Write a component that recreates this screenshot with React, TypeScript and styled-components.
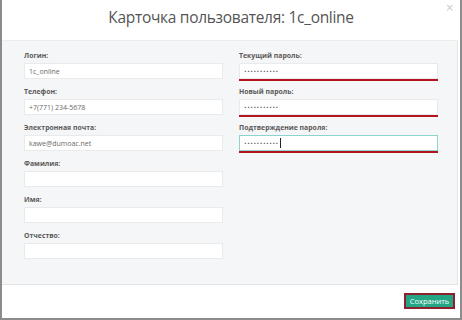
import React from "react";
import styled, { createGlobalStyle } from "styled-components";

const Global = createGlobalStyle`
  html, body { margin: 0; padding: 0; background: #ffffff; }
  * { box-sizing: border-box; }
`;

const Modal = styled.div`
  width: 462px;
  height: 320px;
  display: flex;
  flex-direction: column;
  background: #ffffff;
  border-left: 2px solid #8c8c8c;
  border-right: 2px solid #8c8c8c;
  border-bottom: 2px solid #8c8c8c;
  font-family: "Open Sans", "Noto Sans", sans-serif;
  position: relative;
`;

const Header = styled.div`
  height: 40px;
  display: flex;
  align-items: center;
  justify-content: center;
  padding-bottom: 6px;
`;

const Title = styled.h1`
  margin: 0;
  font-size: 15.5px;
  font-weight: 400;
  color: #555555;
  letter-spacing: -0.3px;
`;

const Close = styled.span`
  position: absolute;
  top: 2px;
  right: 6px;
  font-size: 10px;
  color: #c8c8c8;
  font-family: "DejaVu Sans", sans-serif;
`;

const Body = styled.div`
  height: 245px;
  background: #f5f6f7;
  border-top: 1px solid #eceded;
  border-bottom: 1px solid #e2e3e4;
  border-right: 1px solid #e4e5e6;
  margin-right: 2px;
  padding: 10px 0 0 22px;
  display: grid;
  grid-template-columns: 199px 199px;
  column-gap: 16px;
  align-items: start;
`;

const Column = styled.div`
  display: flex;
  flex-direction: column;
  gap: 8px;
`;

const Field = styled.div`
  display: flex;
  flex-direction: column;
  gap: 2px;
`;

const Label = styled.label`
  font-size: 6.9px;
  line-height: 10px;
  font-weight: 700;
  color: #5a5a5a;
`;

const Input = styled.div<{ $error?: boolean; $focus?: boolean }>`
  height: 16px;
  background: #ffffff;
  border: 1px solid ${(p) => (p.$focus ? "#8fd3ce" : "#e9eaeb")};
  box-shadow: ${(p) => (p.$error ? "0 1px 0 0 #b5141f, 0 2px 0 0 #b5141f" : "none")};
  display: flex;
  align-items: center;
  padding-left: 4px;
  font-size: 7px;
  color: #6a6a6a;
  white-space: nowrap;
`;

const Dots = styled.span`
  font-size: 4.5px;
  letter-spacing: 0.5px;
  color: #555;
  font-family: "DejaVu Sans", sans-serif;
`;

const Caret = styled.span`
  display: inline-block;
  width: 1px;
  height: 10px;
  background: #222;
  margin-left: 1px;
`;

const Footer = styled.div`
  flex: 1;
  display: flex;
  align-items: center;
  justify-content: flex-end;
  padding-right: 5px;
  padding-bottom: 2px;
`;

const Button = styled.button`
  height: 16px;
  width: 51px;
  padding: 0;
  background: #24a584;
  border: 2px solid #8e1f2e;
  color: #ffffff;
  font-family: "Open Sans", "Noto Sans", sans-serif;
  font-size: 7.5px;
  line-height: 12px;
  cursor: pointer;
`;

const left = [
  { label: "Логин:", value: "1c_online" },
  { label: "Телефон:", value: "+7(771) 234-5678" },
  { label: "Электронная почта:", value: "kawe@dumoac.net" },
  { label: "Фамилия:", value: "" },
  { label: "Имя:", value: "" },
  { label: "Отчество:", value: "" },
];

const right = [
  { label: "Текущий пароль:", focus: false },
  { label: "Новый пароль:", focus: false },
  { label: "Подтверждение пароля:", focus: true },
];

export default function App() {
  return (
    <>
      <Global />
      <Modal>
        <Header>
          <Title>Карточка пользователя: 1c_online</Title>
        </Header>
        <Close>×</Close>
        <Body>
          <Column>
            {left.map((f) => (
              <Field key={f.label}>
                <Label>{f.label}</Label>
                <Input>{f.value}</Input>
              </Field>
            ))}
          </Column>
          <Column>
            {right.map((f) => (
              <Field key={f.label}>
                <Label>{f.label}</Label>
                <Input $error $focus={f.focus}>
                  <Dots>•••••••••••</Dots>
                  {f.focus && <Caret />}
                </Input>
              </Field>
            ))}
          </Column>
        </Body>
        <Footer>
          <Button>Сохранить</Button>
        </Footer>
      </Modal>
    </>
  );
}
